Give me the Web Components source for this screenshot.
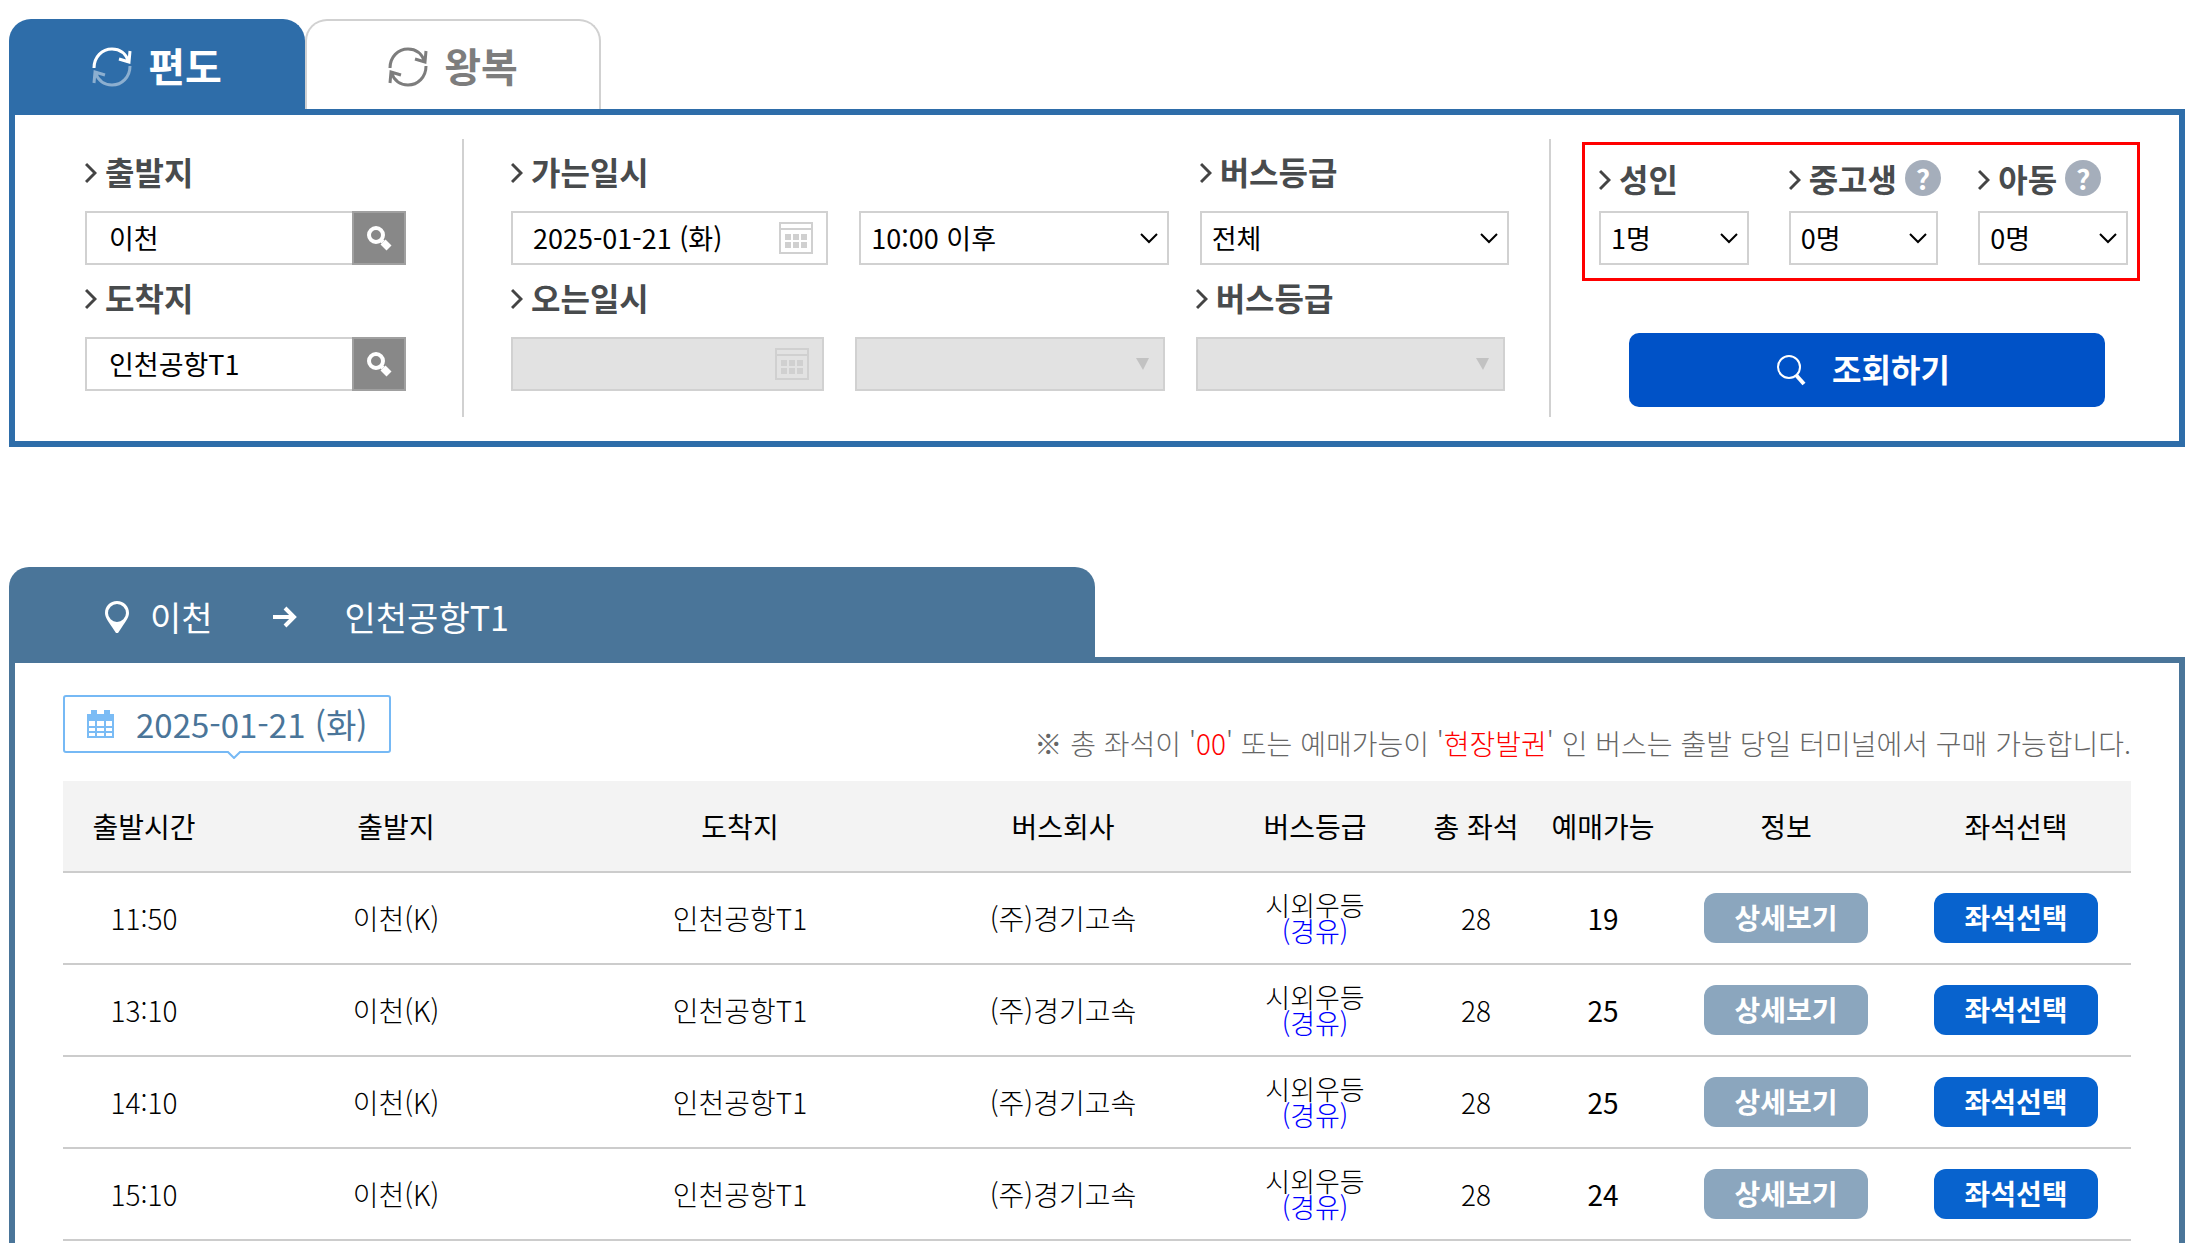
<!DOCTYPE html>
<html lang="ko">
<head>
<meta charset="utf-8">
<title>시외버스 조회</title>
<style>
:root {
  --color-search: #2e6da9;
  --color-result: #4a7599;
  --color-line: #d1d1d1;
}
body {
  margin: 19px 17px 0 9px;
  font-family: "Noto Sans CJK KR", "Noto Sans", sans-serif;
  font-size: 28px;
  color: #000;
  background: #fff;
}
</style>
</head>
<body>

<trip-search>
  <trip-tab slot="tabs" selected>편도</trip-tab>
  <trip-tab slot="tabs">왕복</trip-tab>

  <station-field slot="stations" label="출발지" value="이천"></station-field>
  <station-field slot="stations" label="도착지" value="인천공항T1"></station-field>

  <date-field slot="outbound" label="가는일시" value="2025-01-21 (화)"></date-field>
  <select-field slot="outbound" name="출발시각" value="10:00 이후"></select-field>
  <select-field slot="outbound" label="버스등급" value="전체"></select-field>

  <date-field slot="inbound" label="오는일시" disabled></date-field>
  <select-field slot="inbound" name="도착시각" disabled></select-field>
  <select-field slot="inbound" label="버스등급" disabled></select-field>

  <select-field slot="people" compact label="성인" value="1명"></select-field>
  <select-field slot="people" compact help label="중고생" value="0명"></select-field>
  <select-field slot="people" compact help label="아동" value="0명"></select-field>

  <search-button slot="submit">조회하기</search-button>
</trip-search>

<route-result from="이천" to="인천공항T1">
  <date-badge slot="date">2025-01-21 (화)</date-badge>
  <seat-notice slot="notice"></seat-notice>
  <bus-table></bus-table>
</route-result>

<script>
const icons = {
  cycle: `<svg width="40" height="40" viewBox="0 0 40 40" fill="none" stroke="currentColor" stroke-width="3">
    <path d="M2 21C2 10 10 2 20 2c8 0 14 5 17 13M27 12l10 3 1-11"/>
    <path class="back" d="M38 19c0 11-8 19-18 19-8 0-14-5-17-13M2 36l1-11 10 3"/>
  </svg>`,
  next: `<svg width="12" height="22" viewBox="0 0 12 22" fill="none" stroke="#444" stroke-width="3"><path d="M1 2l9 9-9 9"/></svg>`,
  search: `<svg width="26" height="26" viewBox="0 0 26 26" fill="none" stroke="#fff"><circle cx="10" cy="10" r="7" stroke-width="4"/><path d="M14 14l3 3" stroke-width="4"/><path d="M17 17l6 6" stroke-width="7"/></svg>`,
  calendar: `<svg width="34" height="34" viewBox="0 0 34 34" fill="none" stroke="#d0d0d0" stroke-width="2"><path d="M1 2h32v30H1zM1 8h32"/><path d="M6 16h6m2 0h6m2 0h6M6 24h6m2 0h6m2 0h6" stroke-width="6"/></svg>`,
  down: `<svg width="18" height="12" viewBox="0 0 18 12" fill="none" stroke="#000" stroke-width="2"><path d="M1 2l8 8 8-8"/></svg>`,
  triangle: `<svg width="13" height="12" viewBox="0 0 13 12" fill="#c2c2c2"><path d="M0 0h13L7 12z"/></svg>`,
};

const fieldStyle = `
  :host {
    display: block;
    min-width: 0;
  }
  .label, .label label {
    display: flex;
    align-items: flex-start;
    white-space: nowrap;
  }
  .label {
    height: 36px;
    margin-bottom: 20px;
    font-size: 32px;
    font-weight: 700;
    line-height: 32px;
    color: #484b4d;
  }
  .label svg {
    margin: 7px 8px 0 0;
  }
  .box {
    display: flex;
    box-sizing: border-box;
    height: 54px;
    border: 2px solid var(--color-line);
    background: #fff;
  }
  .box.disabled {
    background: #e2e2e2;
  }
  input, select {
    box-sizing: border-box;
    flex: 1;
    min-width: 0;
    margin: 0;
    border: none;
    border-radius: 0;
    background: none;
    font: inherit;
    font-size: 27px;
    font-weight: 400;
    color: #000;
    appearance: none;
    opacity: 1;
  }
  button {
    flex: none;
    display: flex;
    align-items: center;
    justify-content: center;
    margin: 0;
    padding: 0;
    border: none;
    background: none;
    cursor: pointer;
  }
`;

class TripSearch extends HTMLElement {
  connectedCallback() {
    this.attachShadow({ mode: "open" }).innerHTML = `
    <style>
    :host {
      display: block;
    }
    .tabs {
      display: flex;
    }
    form {
      display: grid;
      grid-template-columns: minmax(0, 449fr) minmax(0, 1087fr) minmax(0, 628fr);
      padding: 24px 0;
      border: 6px solid var(--color-search);
    }
    .stations, .buses {
      display: flex;
      flex-direction: column;
      gap: 16px;
      padding: 16px 56px 26px 70px;
      border-right: 2px solid var(--color-line);
    }
    .buses {
      padding: 16px 40px 26px 47px;
    }
    .line {
      display: grid;
      grid-template-columns: minmax(0, 318fr) minmax(0, 310fr) minmax(0, 310fr);
      gap: 31px;
      align-items: end;
    }
    .line.inbound {
      grid-template-columns: minmax(0, 314fr) minmax(0, 310fr) minmax(0, 310fr);
      padding-right: 4px;
    }
    .passengers {
      padding: 3px 39px 0 31px;
    }
    .people {
      display: grid;
      grid-template-columns: repeat(3, minmax(0, 1fr));
      gap: 40px;
      padding: 17px 9px 13px 14px;
      border: 3px solid #f00;
    }
    .submit {
      padding: 52px 35px 0 47px;
    }
    </style>
    <div class="tabs" role="tablist"><slot name="tabs"></slot></div>
    <form>
      <div class="stations"><slot name="stations"></slot></div>
      <div class="buses">
        <div class="line"><slot name="outbound"></slot></div>
        <div class="line inbound"><slot name="inbound"></slot></div>
      </div>
      <div class="passengers">
        <div class="people"><slot name="people"></slot></div>
        <div class="submit"><slot name="submit"></slot></div>
      </div>
    </form>
    `;
  }
}

class TripTab extends HTMLElement {
  connectedCallback() {
    const selected = this.hasAttribute("selected");

    this.attachShadow({ mode: "open" }).innerHTML = `
    <style>
    :host {
      display: block;
      width: 296px;
    }
    button {
      display: flex;
      align-items: center;
      justify-content: center;
      gap: 16px;
      width: 100%;
      height: 90px;
      padding: 0;
      border: 2px solid var(--color-line);
      border-bottom: none;
      border-radius: 22px 22px 0 0;
      background: #fff;
      color: #7d7d7d;
      font: inherit;
      font-size: 40px;
      font-weight: 700;
      line-height: 48px;
      cursor: pointer;
    }
    button[aria-selected="true"] {
      border-color: var(--color-search);
      background: var(--color-search);
      color: #fff;
    }
    button[aria-selected="true"] .back {
      opacity: .45;
    }
    svg {
      margin-top: 4px;
    }
    </style>
    <button type="button" role="tab" aria-selected="${selected}">${icons.cycle}<span><slot></slot></span></button>
    `;
  }
}

class StationField extends HTMLElement {
  connectedCallback() {
    const label = this.getAttribute("label");

    this.attachShadow({ mode: "open" }).innerHTML = `
    <style>
    ${fieldStyle}
    .box {
      border-right: none;
    }
    input {
      padding: 0 0 2px 22px;
    }
    button {
      width: 54px;
      margin: -2px 0;
      border: 2px solid #a0a0a0;
      background: #888;
    }
    </style>
    <label class="label" for="station">${icons.next}${label}</label>
    <div class="box">
      <input id="station" type="text" value="${this.getAttribute("value")}">
      <button type="button" aria-label="${label} 검색">${icons.search}</button>
    </div>
    `;
  }
}

class DateField extends HTMLElement {
  connectedCallback() {
    const disabled = this.hasAttribute("disabled") ? "disabled" : "";

    this.attachShadow({ mode: "open" }).innerHTML = `
    <style>
    ${fieldStyle}
    input {
      padding: 0 0 2px 20px;
    }
    button {
      margin-right: 13px;
    }
    </style>
    <label class="label" for="date">${icons.next}${this.getAttribute("label")}</label>
    <div class="box ${disabled}">
      <input id="date" type="text" value="${this.getAttribute("value") || ""}" ${disabled}>
      <button type="button" aria-label="달력" ${disabled}>${icons.calendar}</button>
    </div>
    `;
  }
}

class SelectField extends HTMLElement {
  connectedCallback() {
    const label = this.getAttribute("label");
    const value = this.getAttribute("value") || "";
    const disabled = this.hasAttribute("disabled") ? "disabled" : "";
    const name = label ? "" : `aria-label="${this.getAttribute("name")}"`;
    const help = this.hasAttribute("help") ? `<button type="button" aria-label="${label} 안내">?</button>` : "";

    this.attachShadow({ mode: "open" }).innerHTML = `
    <style>
    ${fieldStyle}
    :host([compact]) .label {
      margin-bottom: 13px;
    }
    .box {
      display: grid;
      align-items: center;
    }
    .box > * {
      grid-area: 1 / 1;
    }
    .box svg {
      justify-self: end;
      margin-right: 9px;
      pointer-events: none;
    }
    .box.disabled svg {
      margin-right: 14px;
    }
    select {
      width: 100%;
      height: 50px;
      padding: 0 30px 2px 10px;
    }
    .label button {
      width: 36px;
      height: 36px;
      margin: -2px 0 0 8px;
      border-radius: 50%;
      background: #a5aebb;
      color: #fff;
      font: inherit;
      font-size: 28px;
      font-weight: 700;
      line-height: 36px;
    }
    </style>
    ${label ? `<div class="label"><label for="select">${icons.next}${label}</label>${help}</div>` : ""}
    <div class="box ${disabled}">
      <select id="select" ${name} ${disabled}><option>${value}</option></select>
      ${disabled ? icons.triangle : icons.down}
    </div>
    `;
  }
}

class SearchButton extends HTMLElement {
  connectedCallback() {
    this.attachShadow({ mode: "open" }).innerHTML = `
    <style>
    :host {
      display: block;
    }
    button {
      display: flex;
      align-items: center;
      justify-content: center;
      gap: 26px;
      width: 100%;
      height: 74px;
      padding: 0 8px 0 0;
      border: none;
      border-radius: 10px;
      background: #0052c7;
      color: #fff;
      font: inherit;
      font-size: 32px;
      font-weight: 700;
      cursor: pointer;
    }
    span {
      margin-bottom: 4px;
    }
    </style>
    <button type="button">
      <svg width="30" height="32" viewBox="0 0 30 32" fill="none" stroke="#fff"><circle cx="13" cy="13" r="11" stroke-width="2"/><path d="M20 21l8 9" stroke-width="4"/></svg>
      <span><slot></slot></span>
    </button>
    `;
  }
}

class RouteResult extends HTMLElement {
  connectedCallback() {
    this.attachShadow({ mode: "open" }).innerHTML = `
    <style>
    :host {
      display: block;
      margin-top: 120px;
    }
    h2 {
      display: flex;
      align-items: center;
      box-sizing: border-box;
      width: calc(50% - 2px);
      height: 96px;
      margin: 0 0 -6px;
      padding-left: 96px;
      padding-top: 4px;
      border-radius: 20px 20px 0 0;
      background: var(--color-result);
      color: #fff;
      font-size: 34px;
      font-weight: 400;
      line-height: 48px;
    }
    .from {
      margin: 0 60px 0 21px;
    }
    .to {
      margin-left: 48px;
    }
    section {
      padding: 32px 48px 60px;
      border: 6px solid var(--color-result);
    }
    .top {
      display: flex;
      align-items: start;
      justify-content: space-between;
      height: 86px;
    }
    </style>
    <h2>
      <svg width="24" height="32" viewBox="0 0 24 32" fill="#fff"><path fill-rule="evenodd" d="M12 0C5 0 0 5 0 12c0 5 4 9 7 14l4 6h2l4-6c3-5 7-9 7-14 0-7-5-12-12-12zm0 3a9 9 0 1 1 0 18 9 9 0 0 1 0-18z"/></svg>
      <span class="from">${this.getAttribute("from")}</span>
      <svg width="24" height="22" viewBox="0 0 24 22" fill="none" stroke="#fff" stroke-width="4"><path d="M0 11h21M12 2l9 9-9 9"/></svg>
      <span class="to">${this.getAttribute("to")}</span>
    </h2>
    <section>
      <div class="top"><slot name="date"></slot><slot name="notice"></slot></div>
      <slot></slot>
    </section>
    `;
  }
}

class DateBadge extends HTMLElement {
  connectedCallback() {
    this.attachShadow({ mode: "open" }).innerHTML = `
    <style>
    :host {
      display: flex;
      align-items: center;
      gap: 22px;
      position: relative;
      box-sizing: border-box;
      height: 58px;
      padding: 0 22px;
      border: 2px solid #76b9f5;
      border-radius: 3px;
      color: var(--color-result);
      font-size: 33px;
      font-weight: 400;
      line-height: 48px;
      white-space: nowrap;
    }
    .notch {
      position: absolute;
      left: 50%;
      top: 100%;
    }
    </style>
    <svg width="27" height="28" viewBox="0 0 27 28"><path fill="#7bbcf5" fill-rule="evenodd" d="M0 4h4V0h6v4h7V0h6v4h4v24H0zM2 11v5h6v-5zm8 0v5h7v-5zm9 0v5h6v-5zM2 18v3h6v-3zm8 0v3h7v-3zm9 0v3h6v-3zM2 23v3h6v-3zm8 0v3h7v-3zm9 0v3h6v-3z"/></svg>
    <span><slot></slot></span>
    <svg class="notch" width="14" height="8" viewBox="0 0 14 8"><path d="M0 0l7 7 7-7" fill="#fff" stroke="#76b9f5" stroke-width="2"/></svg>
    `;
  }
}

class SeatNotice extends HTMLElement {
  connectedCallback() {
    this.attachShadow({ mode: "open" }).innerHTML = `
    <style>
    :host {
      display: block;
      align-self: end;
      margin-bottom: 18px;
    }
    p {
      margin: 0;
      color: #666;
      font-weight: 300;
      line-height: 40px;
    }
    em {
      color: #f00;
      font-style: normal;
    }
    </style>
    <p>※ 총 좌석이 '<em>00</em>' 또는 예매가능이 '<em>현장발권</em>' 인 버스는 출발 당일 터미널에서 구매 가능합니다.</p>
    `;
  }
}

class BusTable extends HTMLElement {
  connectedCallback() {
    const buses = [
      { time: "11:50", seats: 28, left: 19 },
      { time: "13:10", seats: 28, left: 25 },
      { time: "14:10", seats: 28, left: 25 },
      { time: "15:10", seats: 28, left: 24 },
    ];
    const columns = [
      ["출발시간", 162],
      ["출발지", 342],
      ["도착지", 346],
      ["버스회사", 300],
      ["버스등급", 204],
      ["총 좌석", 118],
      ["예매가능", 136],
      ["정보", 230],
      ["좌석선택", 230],
    ];

    const cols = columns.map(([, width]) => `<col style="width: ${width}px">`).join("");
    const heads = columns.map(([title]) => `<th scope="col">${title}</th>`).join("");
    const rows = buses.map(bus => `
      <tr>
        <td>${bus.time}</td>
        <td>이천(K)</td>
        <td>인천공항T1</td>
        <td>(주)경기고속</td>
        <td class="grade">시외우등<br><span>(경유)</span></td>
        <td>${bus.seats}</td>
        <td class="left">${bus.left}</td>
        <td><button type="button">상세보기</button></td>
        <td><button type="button" class="pick">좌석선택</button></td>
      </tr>`).join("");

    this.attachShadow({ mode: "open" }).innerHTML = `
    <style>
    :host {
      display: block;
    }
    table {
      width: 100%;
      table-layout: fixed;
      border-spacing: 0;
      text-align: center;
    }
    th, td {
      height: 90px;
      padding: 0;
      border-bottom: 2px solid #ccc;
      font-weight: 300;
      line-height: 40px;
      white-space: nowrap;
    }
    th {
      background: #f3f3f3;
      font-weight: 400;
    }
    .grade {
      font-size: 27px;
      line-height: 26px;
    }
    .grade span {
      color: #00f;
    }
    .left {
      font-weight: 400;
    }
    button {
      display: block;
      width: 164px;
      height: 50px;
      margin: 0 auto;
      padding: 0 0 2px;
      border: none;
      border-radius: 12px;
      background: #8ba6be;
      color: #fff;
      font: inherit;
      font-weight: 700;
      line-height: 40px;
      cursor: pointer;
    }
    button.pick {
      background: #0863ce;
    }
    </style>
    <table>
      <colgroup>${cols}</colgroup>
      <thead><tr>${heads}</tr></thead>
      <tbody>${rows}</tbody>
    </table>
    `;
  }
}

customElements.define("trip-search", TripSearch);
customElements.define("trip-tab", TripTab);
customElements.define("station-field", StationField);
customElements.define("date-field", DateField);
customElements.define("select-field", SelectField);
customElements.define("search-button", SearchButton);
customElements.define("route-result", RouteResult);
customElements.define("date-badge", DateBadge);
customElements.define("seat-notice", SeatNotice);
customElements.define("bus-table", BusTable);
</script>
</body>
</html>
